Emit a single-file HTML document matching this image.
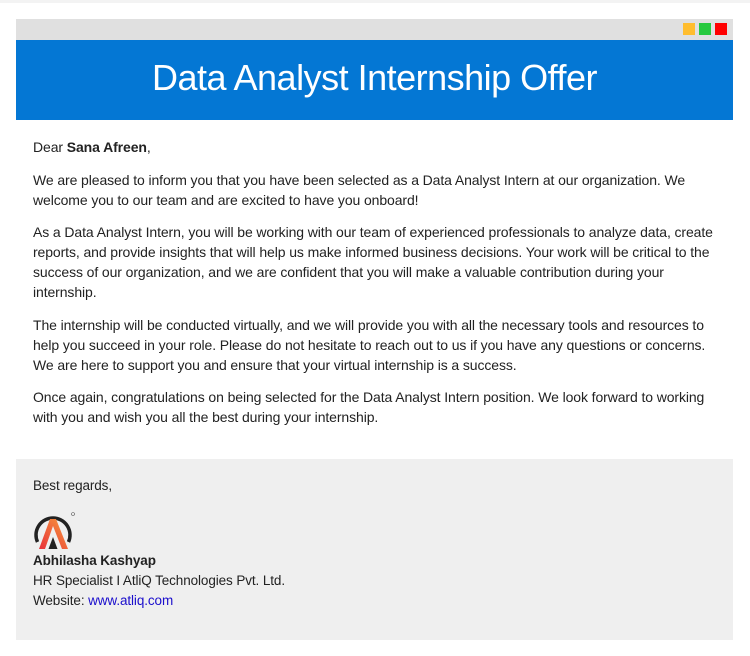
<!DOCTYPE html>
<html><head><meta charset="utf-8"><style>
html,body{margin:0;padding:0;background:#fff;width:750px;height:656px;overflow:hidden}
body{font-family:"Liberation Sans",sans-serif;color:#222}
.top{position:absolute;left:0;top:0;width:750px;height:3px;background:#f3f3f3}
.wrap{position:absolute;left:16px;top:19px;width:717px}
.bar{height:21px;background:#e0e0e0;position:relative}
.sq{position:absolute;top:4px;width:12px;height:12px}
.hdr{height:80px;background:#0477d4;color:#fff;text-align:center;font-size:36px;line-height:76px;letter-spacing:-0.5px}
.body{padding:17px 17px 14px;font-size:14px;line-height:20px;letter-spacing:-0.1px;background:#fff;white-space:nowrap}
.body p{margin:0 0 12.5px}
.foot{background:#efefef;height:181px;padding:17px 17px 0;box-sizing:border-box;font-size:13.5px;line-height:20px;letter-spacing:-0.1px}
a{color:#1a0dcc;text-decoration:none}
</style></head><body>
<div class="top"></div>
<div class="wrap">
<div class="bar"><div class="sq" style="left:667px;background:#ffbd2e"></div><div class="sq" style="left:683px;background:#27c93f"></div><div class="sq" style="left:699px;background:#ff0000"></div></div>
<div class="hdr">Data Analyst Internship Offer</div>
<div class="body" style="height:339px;box-sizing:border-box">
<p>Dear <b>Sana Afreen</b>,</p>
<p>We are pleased to inform you that you have been selected as a Data Analyst Intern at our organization. We<br>welcome you to our team and are excited to have you onboard!</p>
<p>As a Data Analyst Intern, you will be working with our team of experienced professionals to analyze data, create<br>reports, and provide insights that will help us make informed business decisions. Your work will be critical to the<br>success of our organization, and we are confident that you will make a valuable contribution during your<br>internship.</p>
<p>The internship will be conducted virtually, and we will provide you with all the necessary tools and resources to<br>help you succeed in your role. Please do not hesitate to reach out to us if you have any questions or concerns.<br>We are here to support you and ensure that your virtual internship is a success.</p>
<p>Once again, congratulations on being selected for the Data Analyst Intern position. We look forward to working<br>with you and wish you all the best during your internship.</p>
</div>
<div class="foot">
<div>Best regards,</div>
<svg width="44" height="40" viewBox="0 0 44 40" style="display:block;margin-top:14px">
<defs><linearGradient id="g" x1="0" y1="1" x2="1" y2="0"><stop offset="0" stop-color="#e8303a"/><stop offset="1" stop-color="#f79a3a"/></linearGradient></defs>
<path d="M4.5 32 A17 17 0 1 1 35.5 32" fill="none" stroke="#222" stroke-width="3.5"/>
<path d="M6 39 L17 9 L23 9 L35 39 L29 39 L20 16 L12 39 Z" fill="url(#g)"/>
<path d="M15.5 39 L20 27 L24.5 39 Z" fill="#222"/>
<circle cx="40" cy="4" r="1.5" fill="none" stroke="#555" stroke-width="0.6"/>
</svg>
<div style="margin-top:1px"><b>Abhilasha Kashyap</b></div>
<div>HR Specialist I AtliQ Technologies Pvt. Ltd.</div>
<div>Website: <a>www.atliq.com</a></div>
</div>
</div>
</body></html>
